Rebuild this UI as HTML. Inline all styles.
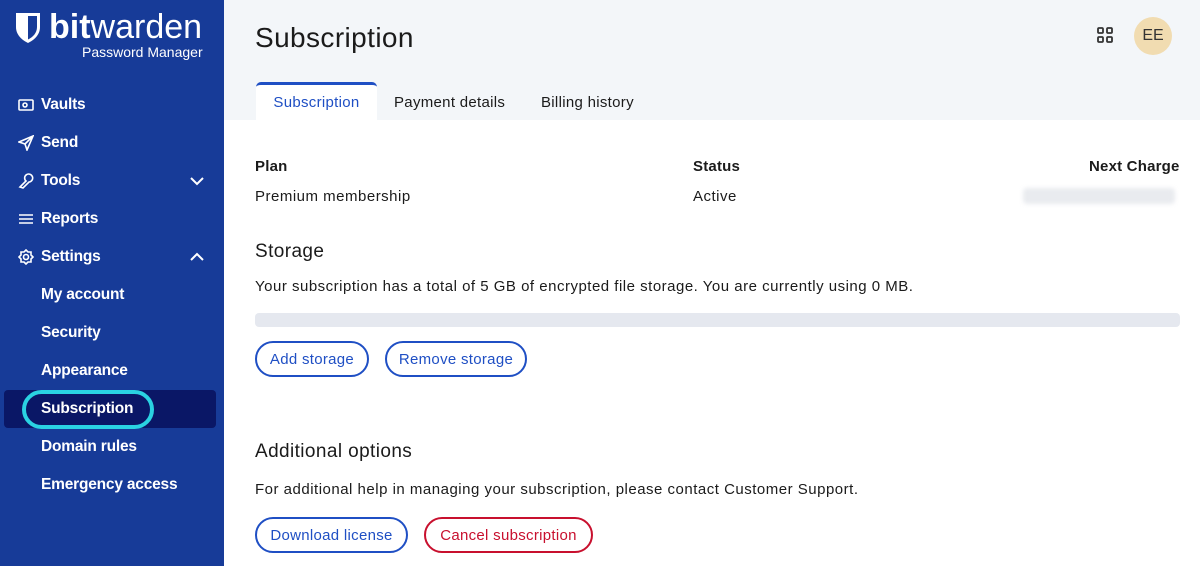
<!DOCTYPE html>
<html><head><meta charset="utf-8"><style>
*{box-sizing:border-box;margin:0;padding:0}
body{width:1200px;height:566px;overflow:hidden;font-family:"Liberation Sans",sans-serif;background:#fff;position:relative}
.side{position:absolute;left:0;top:0;width:224px;height:566px;background:#173b98;color:#fff}
.logo{position:absolute;left:15px;top:8px}
.nav{position:absolute;left:0;font-weight:bold;font-size:15.5px;line-height:20px;white-space:nowrap;letter-spacing:-0.2px}
.nav svg{position:absolute;left:-23px;top:2px}
.chev{position:absolute;left:190px}
.main{position:absolute;left:224px;top:0;right:0;height:120px;background:#f3f6f9}
.t{position:absolute;color:#1b1b1b;white-space:nowrap}
.b15{font-size:15px;letter-spacing:0.5px}
.btn{position:absolute;height:36px;border:2px solid #1f4fc4;border-radius:18px;color:#1f4fc4;font-size:15px;letter-spacing:0.3px;display:flex;align-items:center;justify-content:center}
</style></head><body>
<div class="side">
 <div class="logo">
  <svg width="26" height="32" viewBox="0 0 26 32" style="position:absolute;left:0;top:4px"><path d="M1 1h24v14c0 8-6 13-12 16C7 28 1 23 1 15z" fill="#fff"/><path d="M13 4h9v11c0 6-4 10-9 12.5z" fill="#173b98"/></svg>
  <div style="position:absolute;left:34px;top:0px;font-size:34px;white-space:nowrap"><b>bit</b>warden</div>
  <div style="position:absolute;left:67px;top:36px;font-size:14px;white-space:nowrap">Password Manager</div>
 </div>
 <div class="nav" style="left:41px;top:95px"><svg width="16" height="16" viewBox="0 0 16 16" fill="none" stroke="#fff" stroke-width="1.6"><rect x="1" y="3" width="14" height="10" rx="1"/><circle cx="7" cy="8" r="2"/></svg>Vaults</div>
 <div class="nav" style="left:41px;top:133px"><svg width="16" height="16" viewBox="0 0 16 16" fill="none" stroke="#fff" stroke-width="1.6"><path d="M15 1L1 7l6 2 2 6z M7 9l8-8"/></svg>Send</div>
 <div class="nav" style="left:41px;top:171px"><svg width="16" height="16" viewBox="0 0 16 16" fill="none" stroke="#fff" stroke-width="1.6"><path d="M2 14l6-6a4 4 0 1 1 3 1l-6 6z"/></svg>Tools</div>
 <div class="nav" style="left:41px;top:209px"><svg width="16" height="16" viewBox="0 0 16 16" fill="none" stroke="#fff" stroke-width="1.6"><path d="M1 4h14M1 8h14M1 12h14"/></svg>Reports</div>
 <div class="nav" style="left:41px;top:247px"><svg width="16" height="16" viewBox="0 0 16 16" fill="none" stroke="#fff" stroke-width="1.6"><circle cx="8" cy="8" r="2.5"/><path d="M8 1l2 2h3v3l2 2-2 2v3h-3l-2 2-2-2H3v-3L1 8l2-2V3h3z"/></svg>Settings</div>
 <svg class="chev" style="top:176px" width="14" height="10" viewBox="0 0 14 10" fill="none" stroke="#fff" stroke-width="2"><path d="M1 2l6 6 6-6"/></svg>
 <svg class="chev" style="top:252px" width="14" height="10" viewBox="0 0 14 10" fill="none" stroke="#fff" stroke-width="2"><path d="M1 8l6-6 6 6"/></svg>
 <div class="nav" style="left:41px;top:285px">My account</div>
 <div class="nav" style="left:41px;top:323px">Security</div>
 <div class="nav" style="left:41px;top:361px">Appearance</div>
 <div style="position:absolute;left:4px;top:390px;width:212px;height:38px;background:#0a1766;border-radius:4px"></div>
 <div style="position:absolute;left:22px;top:390px;width:132px;height:39px;border:4px solid #2ad2e2;border-radius:20px"></div>
 <div class="nav" style="left:41px;top:399px">Subscription</div>
 <div class="nav" style="left:41px;top:437px">Domain rules</div>
 <div class="nav" style="left:41px;top:475px">Emergency access</div>
</div>
<div class="main">
 <div class="t" style="left:31px;top:22px;font-size:28px;letter-spacing:0.4px">Subscription</div>
 <svg style="position:absolute;left:873px;top:27px" width="16" height="16" viewBox="0 0 16 16" fill="none" stroke="#333" stroke-width="1.8"><rect x="1" y="1" width="5" height="5" rx="1"/><rect x="10" y="1" width="5" height="5" rx="1"/><rect x="1" y="10" width="5" height="5" rx="1"/><rect x="10" y="10" width="5" height="5" rx="1"/></svg>
 <div style="position:absolute;left:910px;top:17px;width:38px;height:38px;border-radius:50%;background:#f1dcb1;color:#333;font-size:16px;line-height:38px;text-align:center">EE</div>
 <div style="position:absolute;left:32px;top:82px;width:121px;height:38px;background:#fff;border-top:3px solid #1f4fc4;border-radius:5px 5px 0 0;color:#1f4fc4;font-size:15px;letter-spacing:0.3px;line-height:36px;text-align:center">Subscription</div>
 <div class="t b15" style="left:170px;top:94px;letter-spacing:0.3px">Payment details</div>
 <div class="t b15" style="left:317px;top:94px;letter-spacing:0.3px">Billing history</div>
</div>
<div class="t b15" style="left:255px;top:158px;font-weight:bold;letter-spacing:0.2px">Plan</div>
<div class="t b15" style="left:693px;top:158px;font-weight:bold;letter-spacing:0.2px">Status</div>
<div class="t b15" style="left:1089px;top:158px;font-weight:bold;letter-spacing:0.2px">Next Charge</div>
<div class="t b15" style="left:255px;top:188px">Premium membership</div>
<div class="t b15" style="left:693px;top:188px">Active</div>
<div style="position:absolute;left:1023px;top:188px;width:152px;height:16px;background:#e9ebef;border-radius:4px;filter:blur(2px)"></div>
<div class="t" style="left:255px;top:241px;font-size:19px;letter-spacing:0.4px">Storage</div>
<div class="t b15" style="left:255px;top:278px">Your subscription has a total of 5 GB of encrypted file storage. You are currently using 0 MB.</div>
<div style="position:absolute;left:255px;top:313px;width:925px;height:14px;background:#e5e8ef;border-radius:4px"></div>
<div class="btn" style="left:255px;top:341px;width:114px">Add storage</div>
<div class="btn" style="left:385px;top:341px;width:142px">Remove storage</div>
<div class="t" style="left:255px;top:441px;font-size:19px;letter-spacing:0.4px">Additional options</div>
<div class="t b15" style="left:255px;top:481px">For additional help in managing your subscription, please contact Customer Support.</div>
<div class="btn" style="left:255px;top:517px;width:153px">Download license</div>
<div class="btn" style="left:424px;top:517px;width:169px;border-color:#c8102e;color:#c8102e">Cancel subscription</div>
</body></html>
